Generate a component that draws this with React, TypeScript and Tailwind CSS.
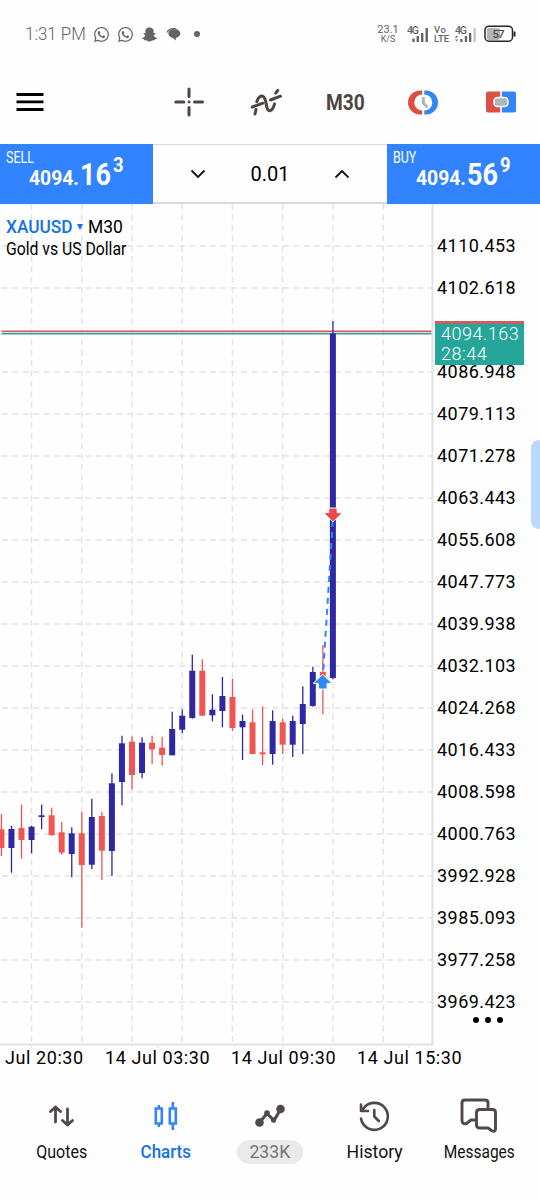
import type { ReactNode } from "react";
import { FaSnapchatGhost, FaWhatsapp } from "react-icons/fa";

// the third level is covered by the current price tag
const levels = [
  "4110.453", "4102.618", "", "4086.948", "4079.113", "4071.278", "4063.443",
  "4055.608", "4047.773", "4039.938", "4032.103", "4024.268", "4016.433", "4008.598",
  "4000.763", "3992.928", "3985.093", "3977.258", "3969.423",
];

// direction, high, body top, body bottom, low (in screen px)
type Candle = ["up" | "down", number, number, number, number];

const candles: Candle[] = [
  ["down", 814, 829.3, 848, 856],
  ["up", 825.7, 829, 848, 872.7],
  ["down", 804.7, 828, 840, 858.7],
  ["up", 825.7, 826.7, 840, 853.3],
  ["up", 804.7, 815.3, 817, 829.3],
  ["down", 807.7, 815.3, 835.3, 835.3],
  ["down", 822, 832.3, 852.7, 854.7],
  ["up", 827.3, 833.3, 854, 877.3],
  ["down", 812, 833.3, 865, 927.7],
  ["up", 798.7, 817, 864.7, 869],
  ["down", 811.7, 816, 850.7, 880],
  ["up", 773.3, 783.3, 851, 876],
  ["up", 735.7, 743.3, 782, 805.3],
  ["down", 736.3, 741.7, 775, 789.3],
  ["up", 737.3, 742.7, 773, 778.3],
  ["down", 735.7, 742.7, 749.3, 764.3],
  ["down", 736.7, 747.7, 755, 765.7],
  ["up", 711.7, 729, 755.3, 755.3],
  ["up", 709.3, 715.7, 729.7, 733.3],
  ["up", 654.7, 670.7, 718, 718.7],
  ["down", 659.3, 670.7, 715.7, 715.7],
  ["up", 694.3, 709.7, 715.3, 721.3],
  ["up", 677, 696, 711, 727.3],
  ["down", 678.7, 697, 728, 731],
  ["up", 714.7, 721, 727.3, 760],
  ["down", 709.3, 722.3, 754, 754],
  ["down", 706.3, 752.3, 754.3, 765],
  ["up", 710.3, 721, 754, 764.7],
  ["down", 718.7, 722.3, 744.7, 754],
  ["up", 715.7, 721, 744.7, 757],
  ["up", 686.3, 704, 724, 754],
  ["up", 666.7, 672, 706, 706.7],
  ["down", 645, 672, 676, 714.3],
  ["up", 321, 333.5, 678, 679.3],
];

const gridX = [31.5, 81.7, 132, 182.3, 232.5, 282.7, 333, 383.2];

function Chart() {
  return (
    <svg viewBox="0 204 434 844" className="h-[844px] w-[434px] shrink-0">
      <g stroke="#e3e3e4" strokeWidth="1.4" strokeDasharray="6 4.4">
        {gridX.map((x) => (
          <line key={x} x1={x} x2={x} y1="204" y2="1044" />
        ))}
        {levels
          .map((_, i) => 246 + i * 42)
          .filter((y) => y !== 330)
          .map((y) => (
            <line key={y} x1="2" x2="432" y1={y} y2={y} />
          ))}
      </g>
      <path d="M432.5 204V1044.5H0" fill="none" stroke="#e2e2e3" strokeWidth="2" />
      <path d="M31.5 1045v3M157.5 1045v3M283.2 1045v3M409 1045v3" stroke="#e2e2e3" />

      {/* ask / bid lines */}
      <path d="M1.5 331.2H431.5" stroke="#d8565c" strokeWidth="1.6" />
      <path d="M1.5 333.7H431.5" stroke="#439a90" strokeWidth="1.8" />

      {candles.map(([dir, high, top, bottom, low], i) => {
        const x = 1.4 + i * 10.045;
        const color = dir === "up" ? "#2e28a2" : "#ef5653";
        return (
          <g key={i} fill={color}>
            <rect x={x - 0.6} y={high} width="1.3" height={low - high} />
            <rect x={x - 3} y={top} width="6" height={bottom - top} />
          </g>
        );
      })}

      {/* closed trade */}
      <path d="M332.8 521L323 675" stroke="#2f86f6" strokeWidth="2" strokeDasharray="6 5" />
      <path
        d="M328.8 508h8.4v4.7h5.2L333 522l-9.4-9.3h5.2z"
        fill="#e9484d"
        stroke="#fff"
        strokeWidth="1"
      />
      <path
        d="M322.7 674.4l9.6 9h-5.2v5.6h-8.800v-5.6h-5.2z"
        fill="#2f86f6"
        stroke="#fff"
        strokeWidth="1"
      />
    </svg>
  );
}

function StatusBar() {
  return (
    <header className="flex h-[68px] items-center pl-[25px] text-[#646464]">
      <span className="w-[68px] text-[19px] font-light">
        <span className="inline-block origin-left scale-x-[.89] whitespace-nowrap">1:31 PM</span>
      </span>
      <FaWhatsapp className="mr-[7px] size-[17px]" />
      <FaWhatsapp className="mr-2 size-[17px]" />
      <FaSnapchatGhost className="mr-[9px] size-[15px]" />
      <svg viewBox="0 0 15 14" className="h-3.5 w-[15px]" fill="currentColor">
        <path d="M.8 4.600C2 .8 9-.2 11.200 2.200 6.500 1.300 3 3 1.300 6z" />
        <ellipse cx="8.300" cy="6.500" rx="6" ry="4.600" />
        <path d="M6 10l3.600 3.500.6-4z" />
      </svg>
      <span className="ml-[13px] size-1.5 rounded-full bg-current" />

      <div className="ml-[178px] flex w-[20px] flex-col items-center leading-none">
        <span className="text-[11px] leading-[10px]">23.1</span>
        <span className="text-[9px] leading-[9px]">K/S</span>
      </div>
      <svg viewBox="408 23 76 22" className="ml-[9px] h-[22px] w-[76px]" fill="currentColor">
        <g fontFamily="Roboto, sans-serif" fontSize="10.5" fontWeight="500">
          <text x="408" y="33.500" textLength="12">4G</text>
          <text x="435" y="32.500" textLength="12" fontSize="9.500">Vo</text>
          <text x="435" y="42.300" textLength="15" fontSize="9.500">LTE</text>
          <text x="456" y="33.500" textLength="12">4G</text>
        </g>
        <path d="M413.300 38.500h2.400V42h-2.400zM417.600 36h2.400v6h-2.400zM422 33h2.400v9H422zM426.500 28h2.400v14h-2.400z" />
        <path d="M461.300 39h2.300v3h-2.300zM465.800 36h2.300v6h-2.300zM470 33h2.300v9H470z" />
        <path d="M474.500 28h2.300v14h-2.300z" fill="#c4c4c4" />
        <path d="M456 37.500l1.500-2 1.500 2zM456 39.500l1.500 2 1.500-2z" />
      </svg>
      <svg viewBox="0 0 34 18" className="ml-px h-[18px] w-[34px]">
        <rect x="3" y="3" width="13" height="12" rx="2" fill="#b4b4b4" />
        <rect x="1" y="1.200" width="27.500" height="15" rx="4" fill="none" stroke="#262626" strokeWidth="1.500" />
        <path d="M30.500 6.500v5" stroke="#262626" strokeWidth="2" />
        <text x="8.500" y="13" fontSize="11.500" fontWeight="500" fill="#4b4b4b" fontFamily="Roboto, sans-serif" textLength="12">
          57
        </text>
      </svg>
    </header>
  );
}

function Toolbar() {
  return (
    <div className="mb-2 flex h-[68px] items-center pl-4 text-[#4e4542]">
      <svg viewBox="0 0 28 20" className="mr-[130px] h-5 w-7" stroke="#000" strokeWidth="2.800">
        <path d="M.5 2.500h27M.5 9.900h27M.5 17.500h27" />
      </svg>
      <svg viewBox="0 0 30 30" className="h-[30px] w-[30px]" fill="none" stroke="currentColor" strokeWidth="3" strokeLinecap="round">
        <path d="M15 2v7.500M15 20.500V28M1.800 15h8M20.500 15h8" />
        <circle cx="15" cy="15" r="1.400" fill="currentColor" stroke="none" />
      </svg>
      <svg viewBox="250 86 32 32" className="ml-[46px] size-8" fill="none" stroke="currentColor" strokeWidth="3" strokeLinecap="round">
        <path d="M252.300 107l10.500-3.800M270.500 100l10-3.800M255 114l1-4.500M256.800 101.500c1.600-4 4-6.500 6.400-5 4.400 3 2 15.500 7 14.200 2.600-.9 3.500-4.200 4.300-6.700M275.800 93l1.900-2.500" />
      </svg>
      <span className="ml-11 w-[40px] text-[22px] font-bold">
        <span className="inline-block origin-left scale-x-[.87]">M30</span>
      </span>
      <svg viewBox="0 0 30 25" className="ml-[42px] h-[25px] w-[30px]">
        <path d="M14.300.5H12a12 12 0 0 0 0 24h2.300v-4a8 8 0 0 1 0-16z" fill="#da5143" />
        <path d="M16.300.5H18a12 12 0 0 1 0 24h-1.700v-4a8 8 0 0 0 0-16z" fill="#3385f6" />
        <path d="M15.300 7V13l4 4.300" fill="none" stroke="#a9b8bf" strokeWidth="3" />
      </svg>
      <svg viewBox="0 0 30 22" className="ml-12 h-[22px] w-[30px]">
        <path d="M14.200.5H2Q0 .5 0 2.500v17q0 2 2 2h12.200z" fill="#da5143" />
        <path d="M15.800.5H28q2 0 2 2v17q0 2-2 2H15.800z" fill="#3385f6" />
        <rect x="8" y="6.500" width="14" height="9" rx="3.500" fill="#a9b8bf" stroke="#fff" strokeWidth="1.500" />
      </svg>
    </div>
  );
}

type QuoteProps = { label: string; pips: string; point: string };

function Quote({ label, pips, point }: QuoteProps) {
  return (
    <button className="flex w-[153px] shrink-0 flex-col justify-start bg-[#3183ff] pl-1.5 text-left leading-none text-white">
      <span className="mt-1.5 block h-4 origin-left scale-x-[.78] text-base leading-4">{label}</span>
      <div className="-mt-[6px] flex h-[27px] items-end pl-[23px] font-bold">
        <span className="w-[51px] text-[21px] leading-[17px]">
          <span className="inline-block origin-left scale-x-[.92]">4094.</span>
        </span>
        <span className="w-[33px] text-[31px] leading-[25px]">
          <span className="inline-block origin-left scale-x-[.87]">{pips}</span>
        </span>
        <span className="mb-[13px] text-[20px] leading-[17px]">
          <span className="inline-block origin-left scale-x-[.92]">{point}</span>
        </span>
      </div>
    </button>
  );
}

function TradePanel() {
  return (
    <div className="flex h-[60px]">
      <Quote label="SELL" pips="16" point="3" />
      <div className="flex flex-1 items-center justify-between border-t border-b-2 border-[#d9d9d9] px-[37px]">
        <svg viewBox="0 0 16 10" className="h-2.5 w-4" fill="none" stroke="#111" strokeWidth="1.800">
          <path d="M1.500 1.500L8 8l6.500-6.500" />
        </svg>
        <span className="text-xl">0.01</span>
        <svg viewBox="0 0 16 10" className="h-2.5 w-4" fill="none" stroke="#111" strokeWidth="1.800">
          <path d="M1.500 8.500L8 2l6.500 6.500" />
        </svg>
      </div>
      <Quote label="BUY" pips="56" point="9" />
    </div>
  );
}

function PriceScale() {
  return (
    <div className="relative flex-1 pt-[21px] pl-[3px]">
      {levels.map((price, i) => (
        <div key={i} className="flex h-[42px] items-center text-[18px] leading-[14px] tracking-[0.45px]">
          {price}
        </div>
      ))}
      {/* current price and time left on the bar */}
      <div className="absolute top-[117px] left-px h-11 w-[89px] border-t-[3px] border-[#cf5f5c] bg-[#26a69a] pl-1.5 text-[18px] leading-[20px] font-light tracking-[0.5px] text-white">
        4094.163
        <br />
        28:44
      </div>
      <div className="absolute top-[813px] left-[39px] flex gap-1.5">
        <i className="size-1.5 rounded-full bg-black" />
        <i className="size-1.5 rounded-full bg-black" />
        <i className="size-1.5 rounded-full bg-black" />
      </div>
    </div>
  );
}

function NavItem({ icon, children }: { icon: ReactNode; children: ReactNode }) {
  return (
    <button className="flex flex-1 flex-col items-center text-[#51484a]">
      <span className="flex h-[42px] items-center">{icon}</span>
      <span className="mt-[3px] flex h-6 items-center text-lg text-[#111]">{children}</span>
    </button>
  );
}

function BottomNav() {
  return (
    <nav className="flex px-[9px] pt-[21px]">
      <NavItem
        icon={
          <svg viewBox="0 0 26 24" className="h-6 w-[26px]" fill="none" stroke="currentColor" strokeWidth="2.800" strokeLinecap="round" strokeLinejoin="round">
            <path d="M7.500 18V3M2.500 7.500L7.500 3l5 4.500M19.500 5v16M14.500 16.500l5 4.500 5-4.500" />
          </svg>
        }
      >
        <span className="scale-x-[.89]">Quotes</span>
      </NavItem>
      <NavItem
        icon={
          <svg viewBox="0 0 26 30" className="h-[30px] w-[26px]" fill="none" stroke="#3583f7" strokeWidth="2.600">
            <path d="M2.800 7.500h6v15h-6zM16.800 7.500h6v15h-6zM5.800 4v3M5.800 23v3M19.800 1v6M19.800 23v6" />
          </svg>
        }
      >
        <span className="scale-x-[.94] font-medium text-[#1272e8]">Charts</span>
      </NavItem>
      <NavItem
        icon={
          <svg viewBox="0 0 30 24" className="h-6 w-[30px]" fill="currentColor">
            <path d="M4.500 18.500L12 9.500l7 7L25.500 5.500" fill="none" stroke="currentColor" strokeWidth="3" />
            <circle cx="4.500" cy="18.500" r="4.300" />
            <circle cx="12" cy="9" r="2.800" />
            <circle cx="18.500" cy="16" r="2.600" />
            <circle cx="25.500" cy="5" r="4.300" />
          </svg>
        }
      >
        <span className="flex h-6 w-[66px] items-center justify-center rounded-full bg-[#eaeaea] text-[#757575]">
          <span className="scale-x-[.98]">233K</span>
        </span>
      </NavItem>
      <NavItem
        icon={
          <svg viewBox="359 1100 30 32" className="h-8 w-[30px]" fill="none" stroke="currentColor" strokeWidth="2.600" strokeLinecap="round" strokeLinejoin="round">
            <path d="M361 1118.500A13.500 13.500 0 1 0 363 1109M361 1104.500v6.500h7M374.300 1110v6.500l4.500 4.500" />
          </svg>
        }
      >
        <span className="scale-x-[.98]">History</span>
      </NavItem>
      <NavItem
        icon={
          <svg viewBox="460 1098 38 36" className="h-9 w-[38px]" fill="none" stroke="currentColor" strokeWidth="2.900" strokeLinecap="round" strokeLinejoin="round">
            <path d="M475 1120h-4l-4.500 3.500q-4.500 1-4.500-3V1103q0-3 3-3h20q3 0 3 3v6" />
            <path d="M480 1109.500h12.500q3 0 3 3V1129q0 3.500-4 1.500l-3.500-2.500h-8q-3.500 0-3.500-3v-12.500q0-3 3.500-3z" />
          </svg>
        }
      >
        <span className="scale-x-[.86]">Messages</span>
      </NavItem>
    </nav>
  );
}

export default function App() {
  return (
    <main className="relative h-[1200px] w-[540px] overflow-hidden bg-[#fefefe] font-['Roboto',sans-serif] text-black">
      <StatusBar />
      <Toolbar />
      <TradePanel />
      <section className="relative flex h-[844px]">
        <Chart />
        <PriceScale />
        <div className="absolute top-3 left-1.5 leading-[22px]">
          <div className="flex h-[22px] items-center text-[19px]">
            <span className="w-[71px] text-[#1272e8]">
              <span className="inline-block origin-left scale-x-[.91] font-medium">XAUUSD</span>
            </span>
            <i className="mr-[5px] border-x-[3px] border-t-[6px] border-x-transparent border-t-[#1272e8]" />
            <span className="origin-left scale-x-[.92]">M30</span>
          </div>
          <div className="origin-left scale-x-[.9] text-[17.5px] whitespace-nowrap">Gold vs US Dollar</div>
        </div>
      </section>
      <div className="flex h-[26px] items-start pl-[5px] text-[18px] leading-[19px] tracking-[0.58px] whitespace-nowrap">
        <span className="w-[100px]">Jul 20:30</span>
        <span className="w-[126px]">14 Jul 03:30</span>
        <span className="w-[126px]">14 Jul 09:30</span>
        <span>14 Jul 15:30</span>
      </div>
      <BottomNav />
      {/* edge panel handle */}
      <div className="absolute top-[440px] right-0 h-[89px] w-[9px] rounded-l-lg bg-[#b9dafd]" />
    </main>
  );
}
